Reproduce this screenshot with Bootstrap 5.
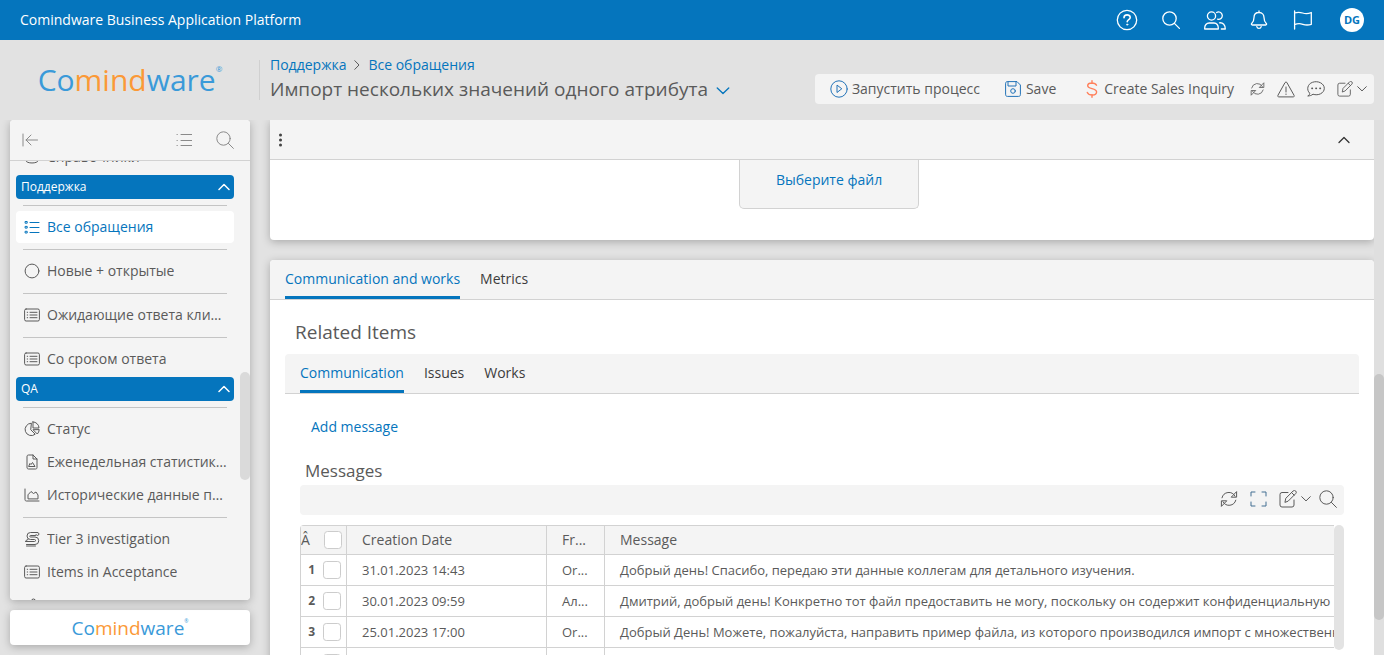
<!DOCTYPE html>
<html lang="ru">
<head>
<meta charset="utf-8">
<meta name="viewport" content="width=device-width, initial-scale=1">
<title>Comindware Business Application Platform</title>
<link href="https://cdn.jsdelivr.net/npm/bootstrap@5.3.0/dist/css/bootstrap.min.css" rel="stylesheet">
<style>
:root{--brand:#0575bd;--ink:#5a5a5a;--line:#d2d2d2;--soft:#f4f4f4}
body{font-family:"Open Sans",sans-serif;font-size:14px;line-height:20px;color:var(--ink);background:#e2e2e2}
svg{fill:none;stroke:currentColor;stroke-width:1;stroke-linecap:round;stroke-linejoin:round;flex:none;display:block}
a{color:var(--brand);text-decoration:none}
.plain{border:0;background:none;padding:0;color:inherit;display:flex;align-items:center;justify-content:center}
.topbar{height:40px;background:var(--brand);color:#fff;padding:0 20px}
.topbar .plain{width:44px;height:40px}
.topbar svg{stroke-width:1.3}
.avatar{width:24px;height:24px;background:#fff;color:var(--brand);font-size:11px;font-weight:700;margin-left:15px}
.subhead{height:80px;padding-right:10px}
.logo-box{width:260px;height:80px}
.wordmark{color:#3a9ad9;font-size:30px;line-height:40px;font-weight:400}
.wordmark b{color:#fb9937;font-weight:inherit}
.wordmark sup{font-size:8px;top:-19px}
.wordmark-small{font-size:19px;line-height:24px}
.wordmark-small sup{font-size:5px;top:-12px}
.crumbs{border-left:1px solid #d0d0d0;height:40px;padding-left:10px;margin:20px 0 20px -1px}
.crumbs h1{font-size:19px;line-height:28px;font-weight:400;margin:0}
.crumb-row{height:20px;margin-top:-5px}
.actions{height:30px;background:var(--soft);border-radius:4px;padding:0 7px 0 15px;margin-top:18px}
.panel{background:#fff;box-shadow:0 2px 8px rgba(0,0,0,.25)}
.side-col{width:240px;margin:0 10px 10px}
.side-top{height:41px;background:var(--soft);border-bottom:1px solid var(--line);color:#8a8a8a;padding:0 16px 0 12px}
.side-body{background:var(--soft);padding:0 16px 0 6px}
.peek{height:13px}
.side-item{display:flex;align-items:center;height:32px;padding:0 7px 0 8px;margin-bottom:1px;color:var(--ink);border-radius:4px;gap:7px}
.side-item.current{background:#fff;color:var(--brand)}
.side-body hr{margin:6px 7px 5px;border-color:#c4c4c4;opacity:1}
.section-btn{width:100%;height:24px;background:var(--brand);color:#fff;border:0;border-radius:4px;font-size:12px;font-weight:500;padding:0 4px 0 5px;margin:1px 0;display:flex;align-items:center;justify-content:space-between}
.section-btn svg{stroke-width:1.5}
.side-item + .section-btn{margin-top:2px}
.side-thumb{width:10px;height:108px;right:0;top:252px;background:#dadada;border-radius:5px}
.side-foot{height:35px;margin-top:10px}
.page-scroll{width:10px;background:#dfdfdf}
.page-thumb{height:46%;margin-top:254px;background:#c6c6c6;border-radius:5px}
.work-area{padding-left:10px;min-width:0}
.upload-body{padding:0 0 31px 14px}
.panel-head{height:40px;background:var(--soft);border-bottom:1px solid var(--line)}
.panel-head svg{stroke-width:1.3}
.drop{width:180px;height:49px;background:var(--soft);border:1px solid var(--line);border-top:0;border-radius:0 0 5px 5px;color:var(--brand)}
.content-panel{margin-top:20px}
.tabbar{height:40px;background:var(--soft);border-bottom:1px solid var(--line);padding:0 15px;gap:20px}
.tabbar .nav-link{padding:0;height:39px;line-height:38px;color:#3c3c3c}
.tabbar .nav-link.active{color:var(--brand);box-shadow:inset 0 -3px var(--brand)}
.related{padding:20px 15px 0}
.related h2{font-size:19px;line-height:24px;font-weight:400;margin:0 0 10px 10px}
.msgs{padding:23px 15px 0}
.add-link{margin-left:11px}
.msgs h3{font-size:17px;line-height:20px;font-weight:400;margin:24px 0 4px 5px}
.gridbar{height:30px;background:var(--soft);border-radius:4px;padding:0 7px 2px 0}
.grid-wrap{padding-right:10px;margin-top:10px}
.grid{table-layout:fixed;width:100%;border-collapse:separate;border-spacing:0;border-left:1px solid var(--line);border-top:1px solid var(--line);border-top-left-radius:4px}
.grid th,.grid td{border:0 solid var(--line);border-bottom-width:1px;padding:0 15px;height:31px;font-size:13px;white-space:nowrap;overflow:hidden}
.grid th{height:29px;background:var(--soft);font-weight:400;font-size:14px}
.grid th+th,.grid td+td{border-left-width:1px}
.grid .num{padding:0}
.grid .num div{gap:8px;padding-right:5px;height:28px}
.grid .num b{font-size:12px}
.grid input{width:18px;height:18px;margin:0;border-color:#ccc;flex:none}
.grid-thumb{width:10px;height:125px;right:0;top:0;background:#e3e3e3;border-radius:5px}
</style>
</head>
<body class="vh-100 overflow-hidden d-flex flex-column">
<svg width="0" height="0" class="position-absolute" aria-hidden="true">
<symbol id="search" viewBox="0 0 18 18"><circle cx="7.5" cy="7.5" r="6.7"/><path d="M12.4 12.4l5 5"/></symbol>
<symbol id="sync" viewBox="0 0 18 16"><path d="M2 6.8A7 7 0 0 1 15 5.2M15.8 9.2A7 7 0 0 1 3 10.8M16.6 1v5.2h-5zM1.4 15V9.8h5z"/></symbol>
<symbol id="pen" viewBox="0 0 18 18"><path d="M9 2.500H3a2 2 0 0 0-2 2v10.500a2 2 0 0 0 2 2h10a2 2 0 0 0 2-2v-5M6 12l.8-3.700 7.300-7.300a1.600 1.600 0 0 1 2.600 2.600l-7.300 7.300zM12.600 2.600l2.600 2.600"/></symbol>
<symbol id="down" viewBox="0 0 10 6"><path d="M.7.7L5 4.900 9.300.7"/></symbol>
<symbol id="up" viewBox="0 0 12 8"><path d="M1 6.500l5-5 5 5"/></symbol>
<symbol id="rect-list" viewBox="0 0 16 14"><rect x=".6" y="1" width="14.800" height="12" rx="1.500"/><path d="M6 4.300h7M6 7h7M6 9.700h7M3.200 4.300h.5M3.200 7h.5M3.200 9.700h.5"/></symbol>
</svg>

<header class="topbar d-flex align-items-center flex-shrink-0">
  <span class="me-auto">Comindware Business Application Platform</span>
  <button class="plain" aria-label="Справка"><svg width="22" height="22" viewBox="0 0 22 22"><circle cx="11" cy="11" r="9.700"/><path d="M8 8.700c0-3.800 6.200-3.600 6.200-.3 0 2.200-3 2.200-3 4.400" stroke-width="1.600"/><circle cx="11.200" cy="15.600" r=".7" fill="currentColor" stroke-width=".6"/></svg></button>
  <button class="plain" aria-label="Поиск"><svg width="18" height="18"><use href="#search"/></svg></button>
  <button class="plain" aria-label="Пользователи"><svg width="22" height="19" viewBox="0 0 22 19"><circle cx="7.500" cy="5" r="4.100"/><path d="M.7 18c-.3-4 2-6 4.500-6H10c2.500 0 4.600 2 4.300 6zM12.600 1.500a3.700 3.700 0 1 1 1 6.700M15.500 11.800c3.500-.3 5.800 2 5.800 6.200h-4"/></svg></button>
  <button class="plain" aria-label="Уведомления"><svg width="18" height="20" viewBox="0 0 18 20"><path d="M9 1v1.500M9 2.500c-3.500 0-5 2.500-5 5 0 3.500-1 4.700-2.300 6-.6.800-.2 1.500.6 1.500h13.400c.8 0 1.200-.7.600-1.500C15 12.200 14 11 14 7.500c0-2.500-1.500-5-5-5zM6.800 16.700c.5 2.300 3.900 2.300 4.400 0"/></svg></button>
  <button class="plain" aria-label="Флаг"><svg width="20" height="20" viewBox="0 0 20 20"><path d="M1.600 1v18M1.600 3c3-1 5-1 8 0s5.500 1 8.700-.5v11.800c-3 1-5.500 1-8.500 0s-5.200-1-8.200.4"/></svg></button>
  <span class="avatar rounded-circle d-flex align-items-center justify-content-center">DG</span>
</header>

<div class="subhead d-flex flex-shrink-0">
  <div class="logo-box d-flex align-items-center justify-content-center flex-shrink-0"><span class="wordmark">Co<b>mind</b>ware<sup>®</sup></span></div>
  <div class="crumbs me-auto">
    <nav class="crumb-row d-flex align-items-center" aria-label="Навигация"><a href="#">Поддержка</a><svg class="mx-2" width="6" height="10" viewBox="0 0 6 10"><path d="M.8.7L5 5 .8 9.300"/></svg><a href="#">Все обращения</a></nav>
    <h1 class="d-flex align-items-center">Импорт нескольких значений одного атрибута<button class="plain ms-2 mt-1" aria-label="Меню записи"><svg width="14" height="8" color="#0575bd"><use href="#down"/></svg></button></h1>
  </div>
  <div class="actions d-flex align-items-center align-self-center">
    <button class="plain me-4"><svg class="me-1" width="18" height="18" viewBox="0 0 18 18" color="#2373b8"><circle cx="9" cy="9" r="8.200"/><path d="M7 5.500v7L11.500 9z"/></svg>Запустить процесс</button>
    <button class="plain me-4 pe-1"><svg class="me-1" width="18" height="18" viewBox="0 0 18 18" color="#2373b8"><path d="M1.600 3.400c0-1.200.6-1.800 1.800-1.800H13L16.400 5v9.600c0 1.200-.6 1.800-1.800 1.800H3.400c-1.200 0-1.800-.6-1.800-1.800zM4 1.600V6h8V1.600"/><circle cx="9" cy="11" r="2.300"/></svg>Save</button>
    <button class="plain me-3"><svg class="me-1" width="16" height="18" viewBox="0 0 16 18" color="#ff7f5a"><path d="M8 .8v2.400M8 14.800v2.400M12.500 5.200C11 2.200 4 2.200 3.700 5.600 3.500 9.300 12.700 8 12.600 12c-.2 4-7.600 4-9.300.5" stroke-width="1.400"/></svg>Create Sales Inquiry</button>
    <button class="plain" aria-label="Обновить"><svg width="15" height="14"><use href="#sync"/></svg></button>
    <button class="plain ms-2 ps-1" aria-label="Предупреждения"><svg width="18" height="17" viewBox="0 0 18 17"><path d="M8.200 1.400a1 1 0 0 1 1.600 0l7.300 13c.4.800 0 1.500-.8 1.500H1.700c-.8 0-1.200-.7-.8-1.500zM9 6v5M9 13v.5"/></svg></button>
    <button class="plain ms-2 ps-1" aria-label="Комментарии"><svg width="18" height="16" viewBox="0 0 18 16"><path d="M1.200 14.900c1.200-.8 1.500-1.700 1.500-2.700C-.8 8.800.5 3 5.500 1.300 11-.7 17.300 2.500 17.300 7.300c0 5-6.300 7.700-11.300 5.900-1.500 1.200-3 1.700-4.800 1.700z"/><path d="M5 7.300h.3M9 7.300h.3M13 7.300h.3" stroke-width="1.700"/></svg></button>
    <button class="plain ms-2 ps-1" aria-label="Редактировать"><svg width="16" height="16"><use href="#pen"/></svg><svg class="ms-1" width="10" height="6"><use href="#down"/></svg></button>
  </div>
</div>

<div class="d-flex flex-grow-1 overflow-hidden">
  <aside class="side-col d-flex flex-column flex-shrink-0">
    <div class="panel rounded-1 flex-grow-1 d-flex flex-column position-relative overflow-hidden">
      <div class="side-top d-flex align-items-center flex-shrink-0">
        <button class="plain me-auto" aria-label="Свернуть"><svg width="16" height="14" viewBox="0 0 16 14"><path d="M1 1v12M15.500 7H4M9 2L4 7l5 5"/></svg></button>
        <button class="plain me-4" aria-label="Список"><svg width="16" height="14" viewBox="0 0 16 14"><path d="M5 1.500h11M5 7.500h11M5 12.500h11M1 1.500h.3M1 7.500h.3M1 12.500h.3"/></svg></button>
        <button class="plain" aria-label="Поиск"><svg width="18" height="18"><use href="#search"/></svg></button>
      </div>
      <nav class="side-body flex-grow-1 overflow-hidden rounded-bottom-1">
        <div class="peek overflow-hidden d-flex align-items-end"><a class="side-item flex-shrink-0" href="#"><svg width="16" height="14" viewBox="0 0 16 14"><path d="M2 2.500v8c0 3.300 12 3.300 12 0v-8c0-2.500-12-2.500-12 0s12 2.500 12 0"/></svg>Справочники</a></div>
        <button class="section-btn">Поддержка<svg width="12" height="8"><use href="#up"/></svg></button>
        <hr>
        <a class="side-item current" href="#"><svg width="16" height="14" viewBox="0 0 16 14"><path d="M6 2.500h9M6 7.500h9M6 12.500h9M1.500 1.500h1.700v1.700H1.500zM1.500 6.400h1.700v1.700H1.500zM1.500 11.300h1.700V13H1.500z"/></svg><span class="text-truncate">Все обращения</span></a>
        <hr>
        <a class="side-item" href="#"><svg width="16" height="16" viewBox="0 0 16 16"><circle cx="8" cy="8" r="6.900"/></svg><span class="text-truncate">Новые + открытые</span></a>
        <hr>
        <a class="side-item" href="#"><svg width="16" height="14"><use href="#rect-list"/></svg><span class="text-truncate">Ожидающие ответа клиента</span></a>
        <hr>
        <a class="side-item" href="#"><svg width="16" height="14"><use href="#rect-list"/></svg><span class="text-truncate">Со сроком ответа</span></a>
        <button class="section-btn">QA<svg width="12" height="8"><use href="#up"/></svg></button>
        <hr>
        <a class="side-item" href="#"><svg width="16" height="16" viewBox="0 0 16 16"><path d="M7 2.200a6.200 6.200 0 1 0 4.200 11L7 9zM9 .9V7h6A6.100 6.100 0 0 0 9 .9zM9.300 9l4 4A6 6 0 0 0 15.200 9z"/></svg><span class="text-truncate">Статус</span></a>
        <a class="side-item pe-0" href="#"><svg width="16" height="16" viewBox="0 0 16 16"><path d="M3 2.500C3 1.500 3.500 1 4.500 1H9l4 4v8.500c0 1-.5 1.500-1.500 1.500h-7C3.500 15 3 14.500 3 13.500zM9 1v4h4M5 12.500h6L8.500 8.500 7 10.500l-.8-.8z"/></svg><span class="text-truncate">Еженедельная статистика обращений</span></a>
        <a class="side-item" href="#"><svg width="16" height="14" viewBox="0 0 16 14"><path d="M1 1v10.500c0 1 .5 1.500 1.500 1.500H15M4 10.500V6.800L7 3.500l2.500 2L12 4l2 3v3.500z"/></svg><span class="text-truncate">Исторические данные проекта</span></a>
        <hr>
        <a class="side-item" href="#"><svg width="16" height="16" viewBox="0 0 16 16"><path d="M13.500 1.500h-7a3.500 3.500 0 0 0 0 7h4a1 1 0 0 1 0 2H1.500M11.500 4.500h-5a.7.700 0 0 0 0 1.500H11a3.700 3.700 0 0 1 0 7.500H2.500M4 8.500l-2 1M12 3.500a1.500 1.500 0 1 0 1.500-2M2.500 15h9"/></svg><span class="text-truncate">Tier 3 investigation</span></a>
        <a class="side-item" href="#"><svg width="16" height="14"><use href="#rect-list"/></svg><span class="text-truncate">Items in Acceptance</span></a>
        <a class="side-item" href="#" aria-label="Участники"><svg width="18" height="14" viewBox="0 0 18 14"><circle cx="9.500" cy="3" r="2"/></svg></a>
      </nav>
      <div class="side-thumb position-absolute"></div>
    </div>
    <div class="side-foot panel rounded-1 d-flex align-items-center justify-content-center flex-shrink-0"><span class="wordmark wordmark-small">Co<b>mind</b>ware<sup>®</sup></span></div>
  </aside>

  <main class="work-area flex-grow-1 overflow-hidden">
    <section class="panel rounded-bottom-1">
      <div class="panel-head d-flex align-items-center justify-content-between ps-2 pe-4">
        <button class="plain" aria-label="Ещё"><svg width="5" height="14" viewBox="0 0 5 14" color="#444"><path d="M2.500 2h.01M2.500 7h.01M2.500 12h.01" stroke-width="3"/></svg></button>
        <button class="plain" aria-label="Свернуть"><svg width="12" height="8" color="#333"><use href="#up"/></svg></button>
      </div>
      <div class="upload-body"><button class="plain drop mx-auto pb-2">Выберите файл</button></div>
    </section>
    <section class="panel rounded-1 content-panel">
      <nav class="tabbar nav flex-nowrap rounded-top-1"><a class="nav-link active" href="#">Communication and works</a><a class="nav-link" href="#">Metrics</a></nav>
      <div class="related">
        <h2>Related Items</h2>
        <nav class="tabbar nav flex-nowrap rounded-top-1"><a class="nav-link active" href="#">Communication</a><a class="nav-link" href="#">Issues</a><a class="nav-link" href="#">Works</a></nav>
        <div class="msgs">
          <a class="add-link d-block" href="#">Add message</a>
          <h3>Messages</h3>
          <div class="gridbar d-flex align-items-center justify-content-end">
            <button class="plain" aria-label="Обновить"><svg width="18" height="16"><use href="#sync"/></svg></button>
            <button class="plain ms-2 ps-1" aria-label="Развернуть"><svg width="17" height="16" viewBox="0 0 17 16" color="#426f92"><path d="M1 5V1h4M12 1h4v4M16 11v4h-4M5 15H1v-4"/></svg></button>
            <button class="plain ms-2 ps-1" aria-label="Редактировать"><svg width="18" height="18"><use href="#pen"/></svg><svg class="ms-1" width="10" height="6"><use href="#down"/></svg></button>
            <button class="plain ms-2" aria-label="Поиск"><svg width="18" height="18"><use href="#search"/></svg></button>
          </div>
          <div class="grid-wrap position-relative">
            <table class="grid">
              <colgroup><col style="width:45px"><col style="width:200px"><col style="width:58px"><col></colgroup>
              <thead><tr><th class="num"><div class="d-flex align-items-center justify-content-between pe-1">Â<input class="form-check-input" type="checkbox" aria-label="Выбрать все"></div></th><th>Creation Date</th><th>Fr...</th><th>Message</th></tr></thead>
              <tbody>
                <tr><td class="num"><div class="d-flex align-items-center justify-content-end"><b>1</b><input class="form-check-input" type="checkbox" aria-label="Строка 1"></div></td><td>31.01.2023 14:43</td><td>Or...</td><td>Добрый день! Спасибо, передаю эти данные коллегам для детального изучения.</td></tr>
                <tr><td class="num"><div class="d-flex align-items-center justify-content-end"><b>2</b><input class="form-check-input" type="checkbox" aria-label="Строка 2"></div></td><td>30.01.2023 09:59</td><td>Ал...</td><td>Дмитрий, добрый день! Конкретно тот файл предоставить не могу, поскольку он содержит конфиденциальную</td></tr>
                <tr><td class="num"><div class="d-flex align-items-center justify-content-end"><b>3</b><input class="form-check-input" type="checkbox" aria-label="Строка 3"></div></td><td>25.01.2023 17:00</td><td>Or...</td><td>Добрый День! Можете, пожалуйста, направить пример файла, из которого производился импорт с множественными</td></tr>
                <tr><td class="num"><div class="d-flex align-items-center justify-content-end"><input class="form-check-input" type="checkbox" aria-label="Строка 4"></div></td><td></td><td></td><td></td></tr>
              </tbody>
            </table>
            <div class="grid-thumb position-absolute"></div>
          </div>
        </div>
      </div>
    </section>
  </main>
  <div class="page-scroll flex-shrink-0"><div class="page-thumb"></div></div>
</div>
<script src="https://cdn.jsdelivr.net/npm/bootstrap@5.3.0/dist/js/bootstrap.bundle.min.js"></script>
</body>
</html>
